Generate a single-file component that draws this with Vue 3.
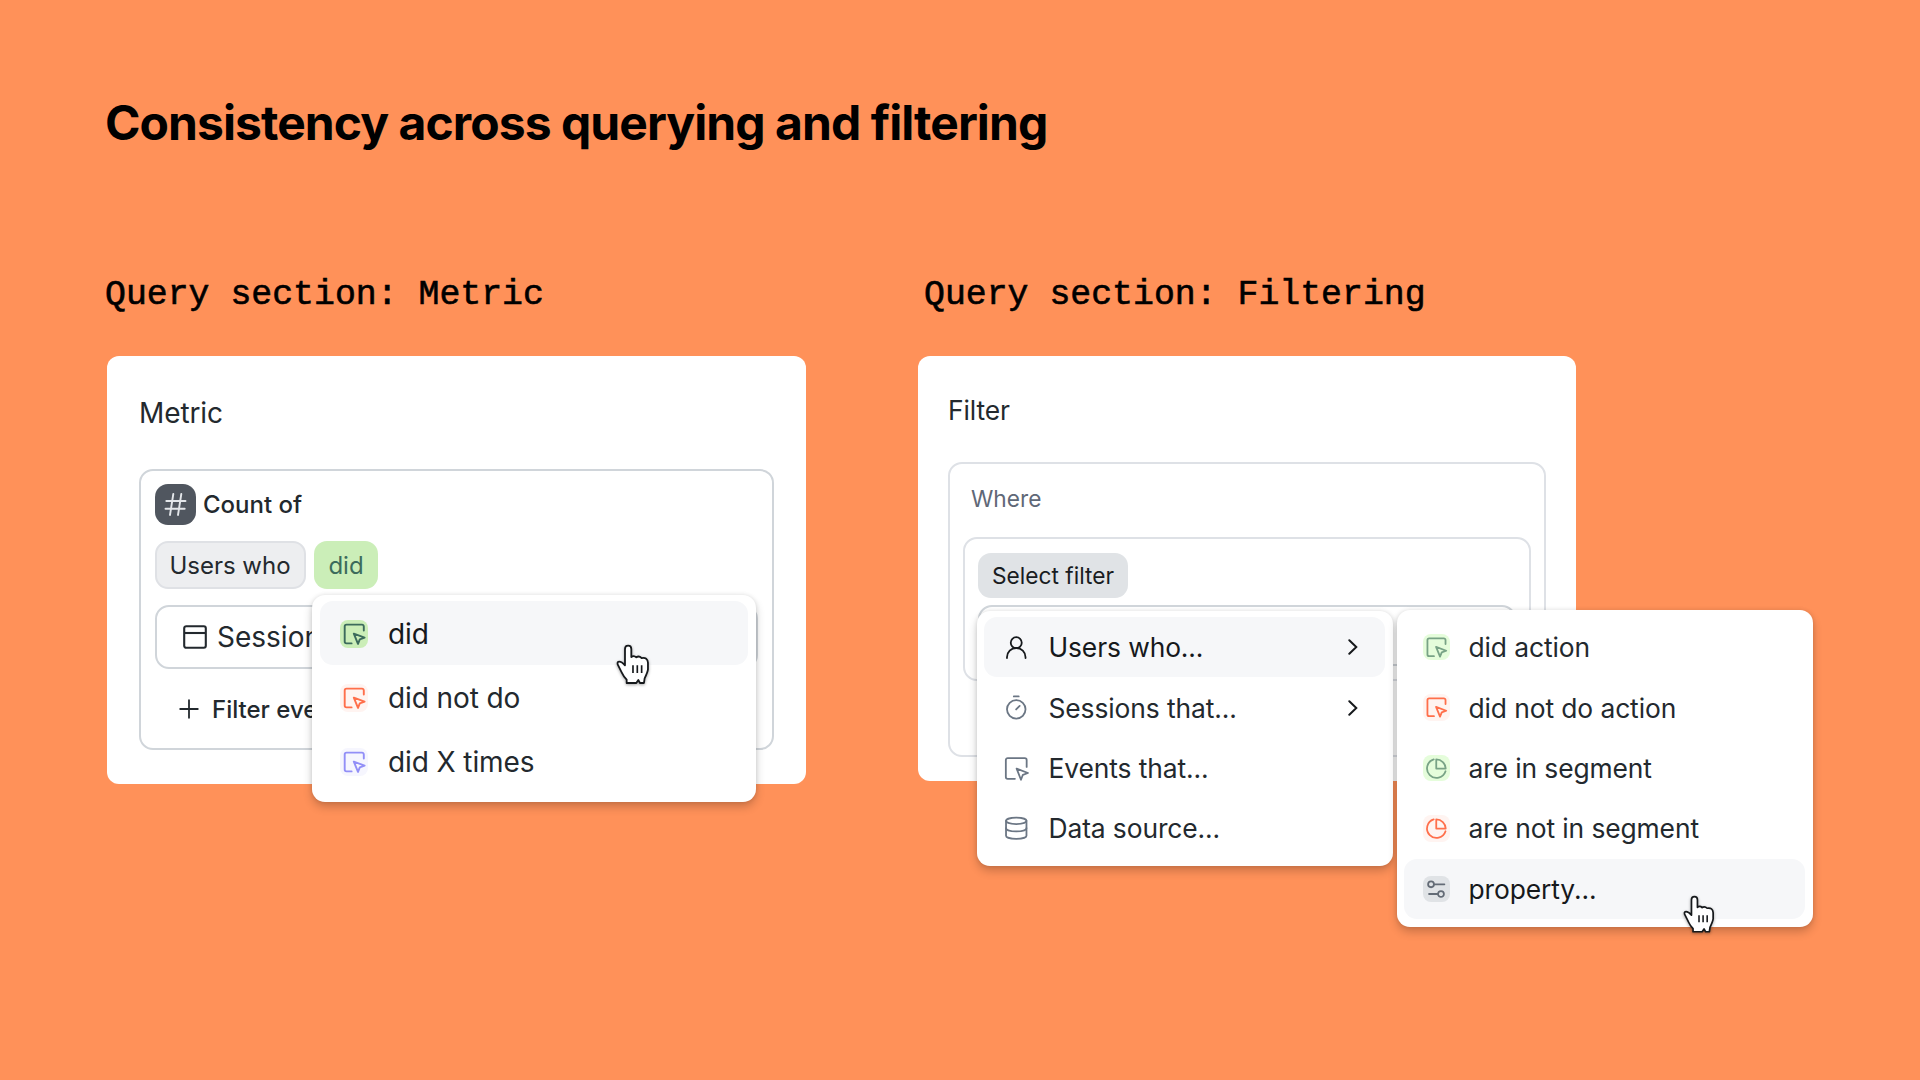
<template>
  <div class="slide">
    <h1 class="title">Consistency across querying and filtering</h1>

    <div class="columns">
      <section class="column metric">
        <h2 class="subtitle">Query section: Metric</h2>
        <div class="card">
          <div class="card-title">Metric</div>
          <div class="box">
            <div class="count-row">
              <span class="hash">
                <svg viewBox="0 0 41 41" fill="none" stroke="#e3e6ea" stroke-width="1.9" stroke-linecap="round">
                  <path d="M18.3 10 15 31M26.3 10 23 31M11.3 17H30.5M10.5 24.7H29.7" />
                </svg>
              </span>
              <span class="count-label">Count of</span>
            </div>
            <div class="chips">
              <span class="chip users">Users who</span>
              <span class="chip did">did</span>
            </div>
            <div class="input">
              <svg class="window-icon" viewBox="0 0 24 24" fill="none" stroke="#23292e" stroke-width="2.1">
                <rect x="1.2" y="1.2" width="21.6" height="21.6" rx="2" />
                <path d="M1.2 8H22.8" />
              </svg>
              <span>Sessions</span>
            </div>
            <div class="add-filter">
              <svg class="plus-icon" viewBox="0 0 20 20" fill="none" stroke="#23292e" stroke-width="1.8" stroke-linecap="round">
                <path d="M10 1.2V18.8M1.2 10H18.8" />
              </svg>
              <span>Filter events</span>
            </div>
          </div>

          <div class="menu metric-menu">
            <div v-for="item in metricItems" :key="item.label" class="item" :class="{ active: item.active }">
              <span class="icon" :class="item.tone">
                <svg viewBox="0 0 28 28"><path v-for="d in icons[item.icon]" :key="d" :d="d" /></svg>
              </span>
              <span class="label">{{ item.label }}</span>
            </div>
            <svg class="cursor" viewBox="0 0 100 122">
              <path :d="handPath" />
              <path class="bars" d="M51 64V87M64 64V87M77 64V87" />
            </svg>
          </div>
        </div>
      </section>

      <section class="column filter">
        <h2 class="subtitle">Query section: Filtering</h2>
        <div class="card">
          <div class="card-title">Filter</div>
          <div class="box">
            <div class="where">Where</div>
            <div class="inner-box">
              <span class="chip select">Select filter</span>
              <div class="input"></div>
            </div>
          </div>

          <div class="menu filter-menu">
            <div v-for="item in filterItems" :key="item.label" class="item" :class="{ active: item.active }">
              <span class="icon" :class="item.tone">
                <svg viewBox="0 0 28 28"><path v-for="d in icons[item.icon]" :key="d" :d="d" /></svg>
              </span>
              <span class="label">{{ item.label }}</span>
              <svg v-if="item.more" class="chevron" viewBox="0 0 10 16">
                <path d="M1.3 1.2 8.3 8 1.3 14.8" />
              </svg>
            </div>
          </div>

          <div class="menu sub-menu">
            <div v-for="item in userItems" :key="item.label" class="item" :class="{ active: item.active }">
              <span class="icon" :class="item.tone">
                <svg viewBox="0 0 28 28"><path v-for="d in icons[item.icon]" :key="d" :d="d" /></svg>
              </span>
              <span class="label">{{ item.label }}</span>
            </div>
            <svg class="cursor" viewBox="0 0 100 122">
              <path :d="handPath" />
              <path class="bars" d="M51 64V87M64 64V87M77 64V87" />
            </svg>
          </div>
        </div>
      </section>
    </div>
  </div>
</template>

<script setup>
const icons = {
  event: [
    'M23.8 10.6V6.4a1.8 1.8 0 0 0-1.8-1.8H6.5a1.8 1.8 0 0 0-1.8 1.8V21.6a1.8 1.8 0 0 0 1.8 1.8H11.6',
    'M13.8 13.6 24.6 17.7 19.8 19.4 18 23.9Z'
  ],
  eventLarge: [
    'M25 12.6V5.2a2 2 0 0 0-2-2H5a2 2 0 0 0-2 2V23.2a2 2 0 0 0 2 2H12.6',
    'M14.4 14.4 26.4 19 21 20.9 19 26.2Z'
  ],
  segment: [
    'M14 4.6V14.3H24A10 10 0 0 0 14 4.6Z',
    'M11.3 4.6A10 10 0 1 0 23.8 17.2'
  ],
  property: [
    'M5.4 8.8a3.1 3.1 0 1 0 6.2 0a3.1 3.1 0 1 0-6.2 0M12.4 8.8H22.6',
    'M15.9 19a3.1 3.1 0 1 0 6.2 0a3.1 3.1 0 1 0-6.2 0M6.4 19H15'
  ],
  user: [
    'M8.2 9.2a5.8 5.8 0 1 0 11.6 0a5.8 5.8 0 1 0-11.6 0',
    'M4.2 25.4V24.6a9.8 9.8 0 0 1 19.6 0V25.4'
  ],
  timer: [
    'M4.2 16.2a9.8 9.8 0 1 0 19.6 0a9.8 9.8 0 1 0-19.6 0',
    'M11.4 2.6H16.6M13.9 16.3 17.6 12.6'
  ],
  database: [
    'M3.2 6.2a10.8 3.4 0 1 0 21.6 0a10.8 3.4 0 1 0-21.6 0',
    'M3.2 6.2V21.8C3.2 23.7 8 25.2 14 25.2S24.8 23.7 24.8 21.8V6.2',
    'M3.2 14C3.2 15.9 8 17.4 14 17.4S24.8 15.9 24.8 14'
  ]
}

const metricItems = [
  { label: 'did', icon: 'event', tone: 'green-strong', active: true },
  { label: 'did not do', icon: 'event', tone: 'red' },
  { label: 'did X times', icon: 'event', tone: 'purple' }
]

const filterItems = [
  { label: 'Users who...', icon: 'user', tone: 'dark', active: true, more: true },
  { label: 'Sessions that...', icon: 'timer', tone: 'slate', more: true },
  { label: 'Events that...', icon: 'eventLarge', tone: 'slate' },
  { label: 'Data source...', icon: 'database', tone: 'slate' }
]

const userItems = [
  { label: 'did action', icon: 'event', tone: 'green' },
  { label: 'did not do action', icon: 'event', tone: 'red' },
  { label: 'are in segment', icon: 'segment', tone: 'green' },
  { label: 'are not in segment', icon: 'segment', tone: 'red' },
  { label: 'property...', icon: 'property', tone: 'gray', active: true }
]

// pointing hand, shared by both menus
const handPath =
  'M27 64V15Q27 5 36.500 5Q46 5 46 15V39Q54 33 61 40Q69 34 77 42Q95 39 96 56V76Q95 84 86 103L84 117H72L67 108L61 117H32V107Q22 96 17 85L5 61Q3 53 10 53Q17 53 27 64Z'
</script>

<style>
body {
  margin: 0;
}
</style>

<style scoped>
.slide {
  width: 1920px;
  height: 1080px;
  box-sizing: border-box;
  padding: 93px 107px 0;
  overflow: hidden;
  background: #ff9159;
  font-family: Inter, "Liberation Sans", sans-serif;
  font-weight: 380;
  color: #23292e;
}

.title {
  margin: 0 0 0 -2px;
  font-size: 48px;
  line-height: 60px;
  font-weight: 700;
  letter-spacing: -0.94px;
  color: #000;
}

.columns {
  display: flex;
  gap: 112px;
  align-items: flex-start;
  padding-top: 122px;
}

.metric {
  width: 699px;
}

.filter {
  width: 658px;
}

.subtitle {
  margin: 0 0 41px -2px;
  font-family: "Liberation Mono", monospace;
  font-size: 34.85px;
  line-height: 40px;
  font-weight: 400;
  -webkit-text-stroke: 0.6px #000;
  color: #000;
  white-space: nowrap;
}

.filter .subtitle {
  margin-left: 6px;
}

.card {
  position: relative;
  box-sizing: border-box;
  border-radius: 12px;
  background: #fff;
}

.metric .card {
  height: 428px;
  padding: 41px 32px 0;
}

.filter .card {
  height: 425px;
  padding: 39px 30px 0;
}

.card-title {
  font-size: 28px;
  line-height: 32px;
  font-weight: 430;
  letter-spacing: -0.1px;
}

.filter .card-title {
  font-size: 26.4px;
  line-height: 30px;
}

.box,
.inner-box,
.input {
  box-sizing: border-box;
  border: 2px solid #d0d5da;
  border-radius: 14px;
}

.metric .box {
  height: 281px;
  margin-top: 40px;
  padding: 13px 14px;
}

.count-row {
  display: flex;
  align-items: center;
  gap: 7px;
  height: 41px;
}

.hash {
  width: 41px;
  height: 41px;
  border-radius: 13px;
  background: #50565f;
}

.hash svg {
  display: block;
}

.count-label {
  font-size: 24px;
  font-weight: 480;
}

.chips {
  display: flex;
  gap: 8px;
  margin-top: 16px;
}

.chip {
  display: flex;
  align-items: center;
  justify-content: center;
  box-sizing: border-box;
  height: 48px;
  border-radius: 13px;
  font-size: 24px;
  white-space: nowrap;
}

.users {
  width: 151px;
  padding-right: 1px;
  border: 2px solid #dfe1e5;
  background: #edeef0;
}

.did {
  width: 64px;
  background: #cbeeb8;
  color: #3c6b5c;
}

.metric .input {
  display: flex;
  align-items: center;
  gap: 10px;
  height: 64px;
  margin-top: 16px;
  padding-left: 26px;
  font-size: 28px;
}

.window-icon {
  width: 24px;
  height: 24px;
}

.add-filter {
  display: flex;
  align-items: center;
  gap: 13px;
  height: 48px;
  margin-top: 16px;
  padding-left: 24px;
  font-size: 24px;
  font-weight: 480;
}

.plus-icon {
  width: 20px;
  height: 20px;
}

.filter .box,
.inner-box {
  border-color: #dee1e6;
}

.filter .box {
  height: 295px;
  margin-top: 37px;
  padding: 21px 13px 0;
}

.where {
  padding-left: 8px;
  font-size: 22.7px;
  line-height: 28px;
  color: #5f6877;
}

.inner-box {
  height: 144px;
  margin-top: 24px;
  padding: 14px 13px 0;
}

.select {
  width: 150px;
  height: 45px;
  background: #e0e3e6;
  font-size: 22.7px;
  color: #191c1f;
}

.filter .input {
  height: 61px;
  margin-top: 7px;
}

.menu {
  position: absolute;
  box-sizing: border-box;
  border-radius: 13px;
  background: #fff;
  box-shadow: 0 5px 10px rgba(0, 0, 0, 0.2), 0 0 4px rgba(0, 0, 0, 0.1);
}

.metric-menu {
  left: 205px;
  top: 239px;
  width: 444px;
  height: 207px;
  padding: 6px 8px;
}

.filter-menu {
  left: 59px;
  top: 255px;
  width: 416px;
  height: 255px;
  padding: 6px 8px 0 7px;
}

.sub-menu {
  left: 479px;
  top: 254px;
  width: 416px;
  height: 317px;
  padding: 7px 8px 0 7px;
}

.item {
  display: flex;
  align-items: center;
  height: 64px;
  box-sizing: border-box;
  padding: 1px 0 0 20px;
  border-radius: 13px;
  font-size: 28px;
  letter-spacing: -0.1px;
}

.filter .item {
  height: 60.4px;
  padding: 0 0 0 19px;
  font-size: 26.4px;
}

.active {
  background: #f6f7f9;
  color: #16191c;
}

.icon {
  flex: none;
  width: 28px;
  height: 28px;
  margin-right: 20px;
  border-radius: 8px;
}

.filter .icon {
  width: 26.5px;
  height: 26.5px;
  margin-right: 19px;
}

.icon svg {
  display: block;
  fill: none;
  stroke: currentColor;
  stroke-width: 1.9;
  stroke-linecap: round;
  stroke-linejoin: round;
}

.green-strong {
  background: #cbeeb8;
  color: #3c6b5c;
}

.green {
  background: #e5fddb;
  color: #78a386;
}

.red {
  background: #fff4f1;
  color: #ff6f4b;
}

.purple {
  background: #f6f6fe;
  color: #928ff7;
}

.gray {
  background: #e0e3e6;
  color: #636b76;
}

.dark {
  color: #16191c;
}

.slate {
  color: #6b7684;
}

.label {
  flex: 1;
}

.chevron {
  width: 10px;
  height: 16px;
  margin-right: 27px;
  fill: none;
  stroke: #16191c;
  stroke-width: 2;
  stroke-linecap: round;
}

.cursor {
  position: absolute;
  left: 304px;
  top: 49px;
  width: 33.3px;
  height: 40.7px;
  fill: #fff;
  stroke: #16191c;
  stroke-width: 5.4;
  stroke-linejoin: round;
  overflow: visible;
  filter: drop-shadow(0 1px 1.5px rgba(0, 0, 0, 0.35));
}

.bars {
  stroke-width: 5;
}

.sub-menu .cursor {
  left: 286px;
  top: 285px;
  width: 31.4px;
  height: 38.4px;
}
</style>
